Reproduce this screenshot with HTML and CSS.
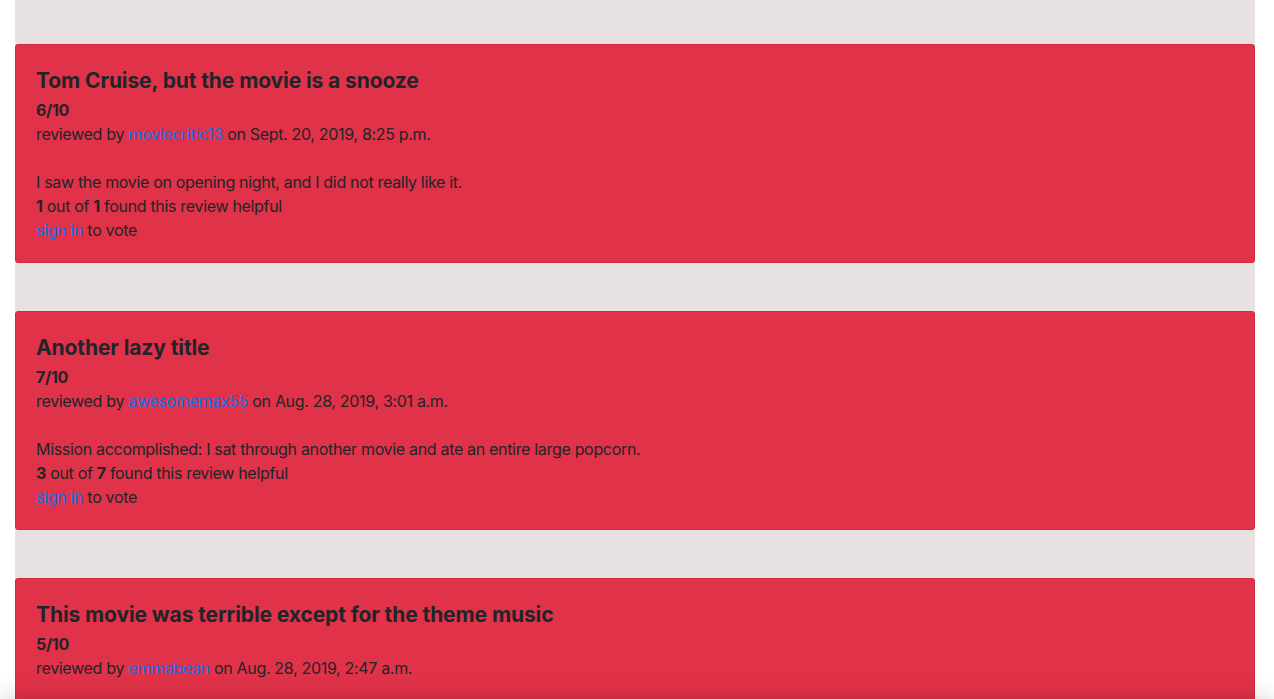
FILE: index.html
```html
<!DOCTYPE html>
<html lang="en">
<head>
<meta charset="utf-8">
<title>Reviews</title>
<link rel="stylesheet" href="styles.css">
</head>
<body>
<main class="container">
  <section class="review">
    <h5 class="review-title">Tom Cruise, but the movie is a snooze</h5>
    <div class="rating">6/10</div>
    <div class="meta">reviewed by <a href="#">moviecritic13</a> on Sept. 20, 2019, 8:25 p.m.</div>
    <div class="spacer"></div>
    <div class="text">I saw the movie on opening night, and I did not really like it.</div>
    <div class="helpful"><b>1</b> out of <b>1</b> found this review helpful</div>
    <div class="vote"><a href="#">sign in</a> to vote</div>
  </section>
  <section class="review">
    <h5 class="review-title">Another lazy title</h5>
    <div class="rating">7/10</div>
    <div class="meta">reviewed by <a href="#">awesomemax55</a> on Aug. 28, 2019, 3:01 a.m.</div>
    <div class="spacer"></div>
    <div class="text">Mission accomplished: I sat through another movie and ate an entire large popcorn.</div>
    <div class="helpful"><b>3</b> out of <b>7</b> found this review helpful</div>
    <div class="vote"><a href="#">sign in</a> to vote</div>
  </section>
  <section class="review">
    <h5 class="review-title">This movie was terrible except for the theme music</h5>
    <div class="rating">5/10</div>
    <div class="meta">reviewed by <a href="#">emmabean</a> on Aug. 28, 2019, 2:47 a.m.</div>
    <div class="spacer"></div>
    <div class="text">The plot made no sense, but the theme music was great.</div>
    <div class="helpful"><b>2</b> out of <b>4</b> found this review helpful</div>
    <div class="vote"><a href="#">sign in</a> to vote</div>
  </section>
</main>
<div class="bottom-bar"></div>
</body>
</html>
```
FILE: styles.css
```css
html, body {
  margin: 0;
  padding: 0;
  background: #ffffff;
}
body {
  font-family: Inter, "Noto Sans", "Liberation Sans", sans-serif;
  font-size: 16px;
  line-height: 24px;
  color: #212529;
  height: 699px;
  overflow: hidden;
}
.container {
  width: 1240px;
  margin: 0 auto 0 15px;
  background: #e7e1e1;
  padding: 44px 0 200px;
  display: flex;
  flex-direction: column;
  gap: 48px;
}
.review {
  background: #e03248;
  border: 1px solid #cf2c40;
  border-radius: 3px;
  padding: 20px;
}
.review-title {
  margin: 0 0 5px;
  padding-top: 3px;
  font-size: 21px;
  line-height: 25px;
  font-weight: 700;
  letter-spacing: -0.1px;
}
.rating {
  font-weight: 700;
}
.spacer {
  height: 24px;
}
a {
  color: #0a72f0;
  text-decoration: none;
}
b {
  font-weight: 700;
}
.meta, .text, .helpful, .vote, .rating {
  letter-spacing: -0.32px;
}
.bottom-bar {
  position: fixed;
  left: 0;
  right: 0;
  bottom: -40px;
  height: 40px;
  box-shadow: 0 0 24px rgba(0, 0, 0, 0.18);
  background: #fff;
}
```
